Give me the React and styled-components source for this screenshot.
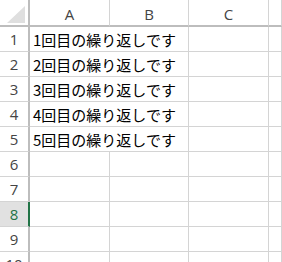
import React from "react";
import styled, { createGlobalStyle } from "styled-components";

const Global = createGlobalStyle`
  html, body { margin: 0; padding: 0; background: #fff; overflow: hidden; }
  #root { width: 282px; height: 262px; overflow: hidden; }
`;

const Sheet = styled.div`
  display: grid;
  grid-template-columns: 30px 80px 79px 80px 1fr;
  grid-auto-rows: 25px;
  grid-template-rows: 27px;
  width: 282px;
  font-family: "Noto Sans CJK JP", sans-serif;
`;

const Corner = styled.div`
  border-right: 2px solid #bdbdbd;
  border-bottom: 2px solid #bdbdbd;
  box-sizing: border-box;
  display: flex;
  align-items: flex-end;
  justify-content: flex-end;
  padding: 0 3px 2px 0;
`;

const ColHead = styled.div`
  box-sizing: border-box;
  border-right: 1px solid #d4d4d4;
  border-bottom: 2px solid #bdbdbd;
  display: flex;
  align-items: center;
  justify-content: center;
  font-family: "Open Sans", "Noto Sans", sans-serif;
  font-size: 15px;
  color: #444;
  padding-top: 2px;
`;

const RowHead = styled.div`
  box-sizing: border-box;
  border-bottom: 1px solid #d4d4d4;
  border-right: 2px solid ${(p) => (p.$active ? "#217346" : "#bdbdbd")};
  background: ${(p) => (p.$active ? "#e1e1e1" : "#fff")};
  color: ${(p) => (p.$active ? "#217346" : "#444")};
  display: flex;
  align-items: center;
  justify-content: center;
  font-family: "Open Sans", "Noto Sans", sans-serif;
  font-size: 15px;
`;

const Cell = styled.div`
  box-sizing: border-box;
  border-right: 1px solid #d4d4d4;
  border-bottom: 1px solid #d4d4d4;
  grid-column: span ${(p) => p.$span || 1};
  display: flex;
  align-items: center;
  padding-left: 3px;
  white-space: nowrap;
  font-size: 15px;
  color: #000;
`;

const cols = ["A", "B", "C", ""];

export default function App() {
  const rows = Array.from({ length: 10 }, (_, i) => i + 1);
  return (
    <>
      <Global />
      <Sheet>
        <Corner>
          <svg width="18" height="17" viewBox="0 0 18 17">
            <polygon points="18,0 18,17 0,17" fill="#dfdfdf" />
          </svg>
        </Corner>
        {cols.map((c, i) => (
          <ColHead key={i}>{c}</ColHead>
        ))}
        {rows.map((r) => (
          <React.Fragment key={r}>
            <RowHead $active={r === 8}>{r}</RowHead>
            {r <= 5 ? (
              <>
                <Cell $span={2}>{r}回目の繰り返しです</Cell>
                <Cell />
                <Cell />
              </>
            ) : (
              <>
                <Cell />
                <Cell />
                <Cell />
                <Cell />
              </>
            )}
          </React.Fragment>
        ))}
      </Sheet>
    </>
  );
}
